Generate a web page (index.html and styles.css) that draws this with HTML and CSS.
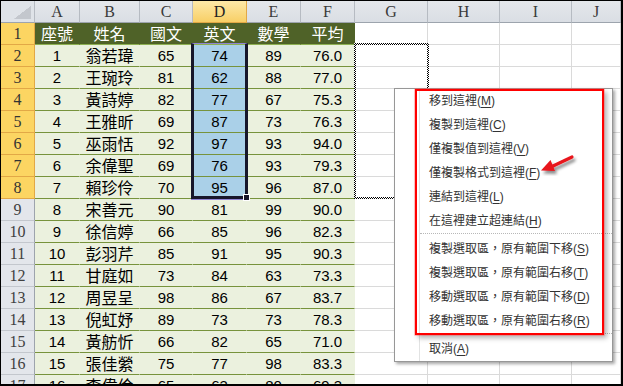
FILE: index.html
```html
<!DOCTYPE html>
<html lang="zh-Hant">
<head>
    <meta charset="UTF-8">
    <title>成績表 - 拖曳選取區</title>
    <link rel="stylesheet" href="styles.css">
</head>
<body>
<div class="screen">
    <div class="sheet">
        <div class="row head">
            <div class="corner"></div>
            <div class="hd">A</div><div class="hd">B</div><div class="hd">C</div>
            <div class="hd sel">D</div><div class="hd">E</div><div class="hd">F</div>
            <div class="hd">G</div><div class="hd">H</div><div class="hd">I</div><div class="hd">J</div>
        </div>
        <div class="row">
            <div class="rh sel">1</div>
            <div class="th">座號</div><div class="th">姓名</div><div class="th">國文</div>
            <div class="th">英文</div><div class="th">數學</div><div class="th">平均</div>
            <div class="gc"></div><div class="gc"></div><div class="gc"></div><div class="gc"></div>
        </div>
        <div class="row">
            <div class="rh sel">2</div>
            <div class="td">1</div><div class="td name">翁若瑋</div><div class="td">65</div>
            <div class="td blue">74</div><div class="td">89</div><div class="td">76.0</div>
            <div class="gc"></div><div class="gc"></div><div class="gc"></div><div class="gc"></div>
        </div>
        <div class="row">
            <div class="rh sel">3</div>
            <div class="td">2</div><div class="td name">王琬玲</div><div class="td">81</div>
            <div class="td blue">62</div><div class="td">88</div><div class="td">77.0</div>
            <div class="gc"></div><div class="gc"></div><div class="gc"></div><div class="gc"></div>
        </div>
        <div class="row">
            <div class="rh sel">4</div>
            <div class="td">3</div><div class="td name">黃詩婷</div><div class="td">82</div>
            <div class="td blue">77</div><div class="td">67</div><div class="td">75.3</div>
            <div class="gc"></div><div class="gc"></div><div class="gc"></div><div class="gc"></div>
        </div>
        <div class="row">
            <div class="rh sel">5</div>
            <div class="td">4</div><div class="td name">王雅昕</div><div class="td">69</div>
            <div class="td blue">87</div><div class="td">73</div><div class="td">76.3</div>
            <div class="gc"></div><div class="gc"></div><div class="gc"></div><div class="gc"></div>
        </div>
        <div class="row">
            <div class="rh sel">6</div>
            <div class="td">5</div><div class="td name">巫雨恬</div><div class="td">92</div>
            <div class="td blue">97</div><div class="td">93</div><div class="td">94.0</div>
            <div class="gc"></div><div class="gc"></div><div class="gc"></div><div class="gc"></div>
        </div>
        <div class="row">
            <div class="rh sel">7</div>
            <div class="td">6</div><div class="td name">余偉聖</div><div class="td">69</div>
            <div class="td blue">76</div><div class="td">93</div><div class="td">79.3</div>
            <div class="gc"></div><div class="gc"></div><div class="gc"></div><div class="gc"></div>
        </div>
        <div class="row">
            <div class="rh sel">8</div>
            <div class="td">7</div><div class="td name">賴珍伶</div><div class="td">70</div>
            <div class="td blue">95</div><div class="td">96</div><div class="td">87.0</div>
            <div class="gc"></div><div class="gc"></div><div class="gc"></div><div class="gc"></div>
        </div>
        <div class="row">
            <div class="rh">9</div>
            <div class="td">8</div><div class="td name">宋善元</div><div class="td">90</div>
            <div class="td">81</div><div class="td">99</div><div class="td">90.0</div>
            <div class="gc"></div><div class="gc"></div><div class="gc"></div><div class="gc"></div>
        </div>
        <div class="row">
            <div class="rh">10</div>
            <div class="td">9</div><div class="td name">徐信婷</div><div class="td">66</div>
            <div class="td">85</div><div class="td">96</div><div class="td">82.3</div>
            <div class="gc"></div><div class="gc"></div><div class="gc"></div><div class="gc"></div>
        </div>
        <div class="row">
            <div class="rh">11</div>
            <div class="td">10</div><div class="td name">彭羽芹</div><div class="td">85</div>
            <div class="td">91</div><div class="td">95</div><div class="td">90.3</div>
            <div class="gc"></div><div class="gc"></div><div class="gc"></div><div class="gc"></div>
        </div>
        <div class="row">
            <div class="rh">12</div>
            <div class="td">11</div><div class="td name">甘庭如</div><div class="td">73</div>
            <div class="td">84</div><div class="td">63</div><div class="td">73.3</div>
            <div class="gc"></div><div class="gc"></div><div class="gc"></div><div class="gc"></div>
        </div>
        <div class="row">
            <div class="rh">13</div>
            <div class="td">12</div><div class="td name">周昱呈</div><div class="td">98</div>
            <div class="td">86</div><div class="td">67</div><div class="td">83.7</div>
            <div class="gc"></div><div class="gc"></div><div class="gc"></div><div class="gc"></div>
        </div>
        <div class="row">
            <div class="rh">14</div>
            <div class="td">13</div><div class="td name">倪虹妤</div><div class="td">89</div>
            <div class="td">73</div><div class="td">73</div><div class="td">78.3</div>
            <div class="gc"></div><div class="gc"></div><div class="gc"></div><div class="gc"></div>
        </div>
        <div class="row">
            <div class="rh">15</div>
            <div class="td">14</div><div class="td name">黃舫忻</div><div class="td">66</div>
            <div class="td">82</div><div class="td">65</div><div class="td">71.0</div>
            <div class="gc"></div><div class="gc"></div><div class="gc"></div><div class="gc"></div>
        </div>
        <div class="row">
            <div class="rh">16</div>
            <div class="td">15</div><div class="td name">張佳縈</div><div class="td">75</div>
            <div class="td">77</div><div class="td">98</div><div class="td">83.3</div>
            <div class="gc"></div><div class="gc"></div><div class="gc"></div><div class="gc"></div>
        </div>
        <div class="row">
            <div class="rh">17</div>
            <div class="td">16</div><div class="td name">李偉倫</div><div class="td">65</div>
            <div class="td">63</div><div class="td">80</div><div class="td">69.3</div>
            <div class="gc"></div><div class="gc"></div><div class="gc"></div><div class="gc"></div>
        </div>
    </div>

    <!-- drag outline of D2:D8 and copy marquee on G2:G8 -->
    <div class="selection"><span class="handle"></span></div>
    <div class="ants"></div>

    <div class="menu">
        <div class="item">移到這裡(<u>M</u>)</div>
        <div class="item">複製到這裡(<u>C</u>)</div>
        <div class="item">僅複製值到這裡(<u>V</u>)</div>
        <div class="item">僅複製格式到這裡(<u>F</u>)</div>
        <div class="item">連結到這裡(<u>L</u>)</div>
        <div class="item">在這裡建立超連結(<u>H</u>)</div>
        <div class="sep"></div>
        <div class="item">複製選取區，原有範圍下移(<u>S</u>)</div>
        <div class="item">複製選取區，原有範圍右移(<u>T</u>)</div>
        <div class="item">移動選取區，原有範圍下移(<u>D</u>)</div>
        <div class="item">移動選取區，原有範圍右移(<u>R</u>)</div>
        <div class="sep"></div>
        <div class="item">取消(<u>A</u>)</div>
    </div>
    <div class="redbox"></div>

    <svg class="arrow" width="44" height="32" viewBox="0 0 44 32">
        <defs>
            <filter id="sh" x="-30%" y="-30%" width="160%" height="160%">
                <feDropShadow dx="2" dy="3" stdDeviation="1.5" flood-color="#000" flood-opacity="0.45"/>
            </filter>
        </defs>
        <g filter="url(#sh)">
            <line x1="36" y1="7" x2="16" y2="16.5" stroke="#e8141b" stroke-width="3.2" stroke-linecap="round"/>
            <polygon points="5,20.5 19,21 14.5,10" fill="#e8141b"/>
        </g>
    </svg>
</div>
</body>
</html>
```

FILE: styles.css
```css
body {
    margin: 0;
    background: #fff;
}
.screen {
    position: relative;
    width: 623px;
    height: 386px;
    box-sizing: border-box;
    border: 1px solid #000;
    border-right-width: 2px;
    border-bottom-width: 2px;
    overflow: hidden;
    background: #fff;
}
.row {
    display: grid;
    grid-template-columns: 34px 45px 60px 53px 54px 54px 54px 73px 72px 72px 49px;
    height: 22px;
}
.row > div {
    box-sizing: border-box;
    border-right: 1px solid transparent;
    border-bottom: 1px solid transparent;
    text-align: center;
    line-height: 21px;
    white-space: nowrap;
}
.corner {
    background: linear-gradient(to top left, #c3c7cd 50%, transparent 51%) right 3px bottom 3px / 17px 13px no-repeat, #dfe3e8;
    border-right-color: #b6bbc2 !important;
    border-bottom-color: #9da4ad !important;
}
.hd {
    background: linear-gradient(#e4e7eb, #dadee4);
    border-right-color: #b6bbc2 !important;
    border-bottom-color: #9da4ad !important;
    color: #3a3a3a;
    font-family: "Liberation Serif", "DejaVu Serif", serif;
    font-size: 16px;
}
.hd.sel {
    background: linear-gradient(#fde9a8, #f8cf66);
    border-right-color: #e2a846 !important;
    border-bottom-color: #e2a846 !important;
    color: #222;
}
.rh {
    background: #e3e6eb;
    border-right-color: #9da4ad !important;
    border-bottom-color: #c3c7cd !important;
    color: #404040;
    font-family: "Liberation Serif", "DejaVu Serif", serif;
    font-size: 16px;
}
.rh.sel {
    background: #fcd562;
    border-right-color: #e2a846 !important;
    border-bottom-color: #e2a846 !important;
    color: #333;
}
.th {
    background: #4f6228;
    color: #fff;
    border-bottom-color: #8db051 !important;
    font-family: "Noto Sans CJK TC", sans-serif;
    font-size: 16px;
}
.td {
    background: #ebf1de;
    color: #000;
    border-bottom-color: #77933c !important;
    font-family: "Liberation Sans", Arial, sans-serif;
    font-size: 15px;
}
.td.name {
    font-family: "Noto Sans CJK TC", sans-serif;
    font-size: 16px;
}
.td.blue {
    background: #aad0e8;
}
.gc {
    background: #fff;
    border-right-color: #dadada !important;
    border-bottom-color: #dadada !important;
}
.selection {
    position: absolute;
    left: 190px;
    top: 42px;
    width: 57px;
    height: 156px;
    box-sizing: border-box;
    border: 3px solid #17162a;
    border-top: 1px solid #8f83d3;
    box-shadow: 0 1px 0 #8f83d3;
}
.handle {
    position: absolute;
    right: -5px;
    bottom: -5px;
    width: 5px;
    height: 5px;
    background: #17162a;
    border: 1px solid #fff;
}
.ants {
    position: absolute;
    left: 353px;
    top: 42px;
    width: 75px;
    height: 156px;
    box-sizing: border-box;
    padding: 2px;
    background: repeating-conic-gradient(#000 0 25%, #fff 0 50%) 0 0 / 2px 2px;
    -webkit-mask: linear-gradient(#000 0 0) content-box, linear-gradient(#000 0 0);
    -webkit-mask-composite: xor;
    mask-composite: exclude;
}
.menu {
    position: absolute;
    left: 393px;
    top: 87px;
    width: 219px;
    box-sizing: border-box;
    border: 1px solid #979797;
    background: linear-gradient(to right, #fff 0 24px, #e2e3e3 24px 25px, #fff 25px);
    box-shadow: 2px 2px 3px rgba(0, 0, 0, 0.35);
    font-family: "Liberation Sans", "Noto Sans CJK TC", sans-serif;
    font-size: 12px;
    color: #333;
}
.item {
    height: 24px;
    line-height: 24px;
    padding-left: 34px;
    white-space: nowrap;
}
.item u {
    text-underline-offset: 2px;
}
.sep {
    height: 4px;
    box-sizing: border-box;
    margin-left: 25px;
    border-top: 1px dotted #b8b8b8;
}
.redbox {
    position: absolute;
    left: 414px;
    top: 88px;
    width: 189px;
    height: 246px;
    box-sizing: border-box;
    border: 2px solid #ff0000;
    box-shadow: 0 0 0 0.6px rgba(255, 90, 90, 0.6), 3px 3px 5px rgba(0, 0, 0, 0.3);
}
.arrow {
    position: absolute;
    left: 535px;
    top: 149px;
}
```
